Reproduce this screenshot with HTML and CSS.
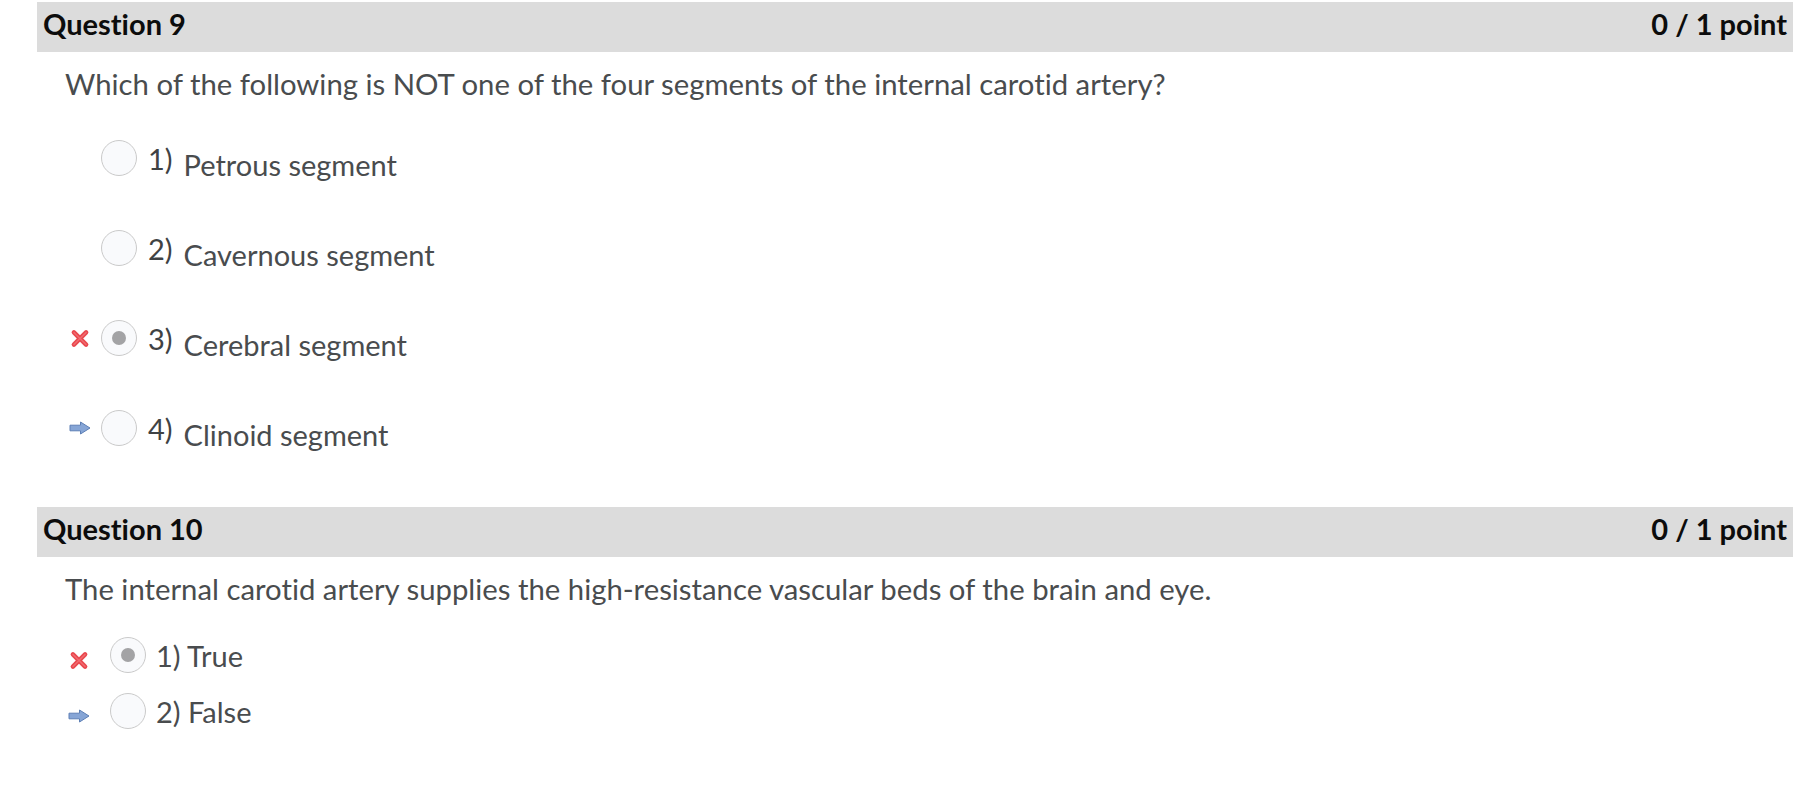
FILE: index.html
```html
<!DOCTYPE html>
<html lang="en">
<head>
<meta charset="utf-8">
<title>Quiz review</title>
<link rel="stylesheet" href="styles.css">
</head>
<body>
<div class="quiz">
  <section class="question q9">
    <div class="q-head"><span class="q-title">Question 9</span><span class="q-score">0 / 1 point</span></div>
    <p class="q-text">Which of the following is NOT one of the four segments of the internal carotid artery?</p>
    <ul class="options mc">
      <li class="opt"><span class="mark"></span><span class="radio"></span><span class="num">1)</span><span class="label">Petrous segment</span></li>
      <li class="opt"><span class="mark"></span><span class="radio"></span><span class="num">2)</span><span class="label">Cavernous segment</span></li>
      <li class="opt"><span class="mark"><svg class="ico-x" viewBox="0 0 20 20" width="20" height="19"><path d="M3.6 3.6 L16.4 16.4 M16.4 3.6 L3.6 16.4" stroke="#e9484e" stroke-width="4.8" stroke-linecap="round" fill="none"/><path d="M3.6 3.6 L16.4 16.4 M16.4 3.6 L3.6 16.4" stroke="#f78a8e" stroke-width="1.4" stroke-linecap="round" fill="none" opacity="0.55"/></svg></span><span class="radio checked"></span><span class="num">3)</span><span class="label">Cerebral segment</span></li>
      <li class="opt"><span class="mark"><svg class="ico-arrow" viewBox="0 0 22 14" width="22" height="14"><path d="M1 4.2 H11.5 V1 L21 7 L11.5 13 V9.8 H1 Z" fill="#86a5d6" stroke="#5d7fb5" stroke-width="1" stroke-linejoin="round"/></svg></span><span class="radio"></span><span class="num">4)</span><span class="label">Clinoid segment</span></li>
    </ul>
  </section>
  <section class="question q10">
    <div class="q-head"><span class="q-title">Question 10</span><span class="q-score">0 / 1 point</span></div>
    <p class="q-text">The internal carotid artery supplies the high-resistance vascular beds of the brain and eye.</p>
    <ul class="options tf">
      <li class="opt"><span class="mark"><svg class="ico-x" viewBox="0 0 20 20" width="20" height="19"><path d="M3.6 3.6 L16.4 16.4 M16.4 3.6 L3.6 16.4" stroke="#e9484e" stroke-width="4.8" stroke-linecap="round" fill="none"/><path d="M3.6 3.6 L16.4 16.4 M16.4 3.6 L3.6 16.4" stroke="#f78a8e" stroke-width="1.4" stroke-linecap="round" fill="none" opacity="0.55"/></svg></span><span class="radio checked"></span><span class="text">1) True</span></li>
      <li class="opt"><span class="mark"><svg class="ico-arrow" viewBox="0 0 22 14" width="22" height="14"><path d="M1 4.2 H11.5 V1 L21 7 L11.5 13 V9.8 H1 Z" fill="#86a5d6" stroke="#5d7fb5" stroke-width="1" stroke-linejoin="round"/></svg></span><span class="radio"></span><span class="text">2) False</span></li>
    </ul>
  </section>
</div>
</body>
</html>
```
FILE: styles.css
```css
html, body {
  margin: 0;
  background: #ffffff;
}
body {
  font-family: Lato, "Open Sans", "Liberation Sans", sans-serif;
  color: #494c4e;
  font-variant-ligatures: none;
}
.quiz {
  padding: 2px 11px 0 37px;
}
.q-head {
  height: 50px;
  box-sizing: border-box;
  background: #dcdcdc;
  display: flex;
  justify-content: space-between;
  align-items: center;
  padding: 0 6px 7px;
  font-weight: 700;
  font-size: 29px;
  color: #0c0c0c;
}
.q-text {
  margin: 14px 0 0 28px;
  font-size: 29.3px;
  line-height: 36px;
}
.options {
  list-style: none;
  margin: 0;
  padding: 0;
  display: flex;
  flex-direction: column;
}
.options.mc {
  margin: 38px 0 0 32px;
  gap: 54px;
}
.options.tf {
  margin: 30px 0 0 31px;
  gap: 20px;
}
.opt {
  display: flex;
  align-items: center;
  height: 36px;
  font-size: 29px;
}
.mark {
  width: 22px;
  margin-right: 10px;
  display: flex;
  justify-content: center;
  align-items: center;
}
.tf .mark {
  margin-right: 20px;
  padding-top: 10px;
}
.radio {
  width: 36px;
  height: 36px;
  box-sizing: border-box;
  border: 1px solid #cacaca;
  border-radius: 50%;
  background: #f9fafc;
  display: flex;
  align-items: center;
  justify-content: center;
  flex: none;
}
.radio.checked::after {
  content: "";
  width: 14px;
  height: 14px;
  border-radius: 50%;
  background: #a3a3a5;
}
.num {
  margin-left: 11px;
  color: #3f4244;
}
.label {
  margin-left: 11px;
  padding-top: 12px;
}
.tf .text {
  margin-left: 10px;
}
.question.q10 {
  margin-top: 61px;
}
```
